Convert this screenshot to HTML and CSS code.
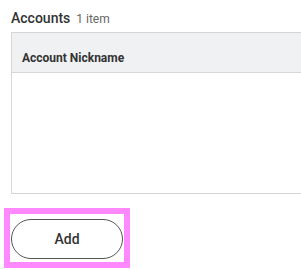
FILE: index.html
```html
<!DOCTYPE html>
<html lang="en">
<head>
    <meta charset="UTF-8">
    <meta name="viewport" content="width=device-width, initial-scale=1.0">
    <title>Accounts</title>
    <link rel="stylesheet" href="styles.css">
</head>
<body>

<div class="section">
    <div class="section-title">
        <span class="title">Accounts</span>
        <span class="count">1 item</span>
    </div>

    <div class="grid">
        <div class="grid-head">Account Nickname</div>
        <div class="grid-body"></div>
    </div>
</div>

<div class="actions">
    <button class="add-btn" type="button">Add</button>
</div>

</body>
</html>
```

FILE: styles.css
```css
body {
    font-family: Roboto, "Liberation Sans", Arial, sans-serif;
    background-color: #ffffff;
    color: #333;
    margin: 0;
    overflow: hidden;
}

.section {
    padding: 8px 0 0 11px;
}

.section-title {
    height: 20px;
    line-height: 20px;
    display: flex;
    align-items: baseline;
    gap: 6px;
}

.title {
    font-size: 14px;
    font-weight: 500;
    color: #333;
}

.count {
    font-size: 12px;
    color: #666;
}

.grid {
    margin-top: 4px;
    width: 330px;
    border: 1px solid #d4d6d8;
    border-right: none;
}

.grid-head {
    height: 22px;
    padding: 17px 0 0 10px;
    line-height: 16px;
    background-color: #f0f1f2;
    border-bottom: 1px solid #d4d6d8;
    font-size: 12px;
    font-weight: 700;
    color: #333;
}

.grid-body {
    height: 120px;
}

.actions {
    margin: 14px 0 2px 4px;
    width: 114px;
    height: 43px;
    padding-top: 5px;
    border: 6px solid #ff88ff;
}

.add-btn {
    display: block;
    margin-left: 1px;
    width: 112px;
    height: 40px;
    border: 1px solid #555;
    border-radius: 20px;
    background: #fff;
    font-family: Roboto, "Liberation Sans", Arial, sans-serif;
    font-size: 14px;
    font-weight: 500;
    color: #333;
    cursor: pointer;
}
```
